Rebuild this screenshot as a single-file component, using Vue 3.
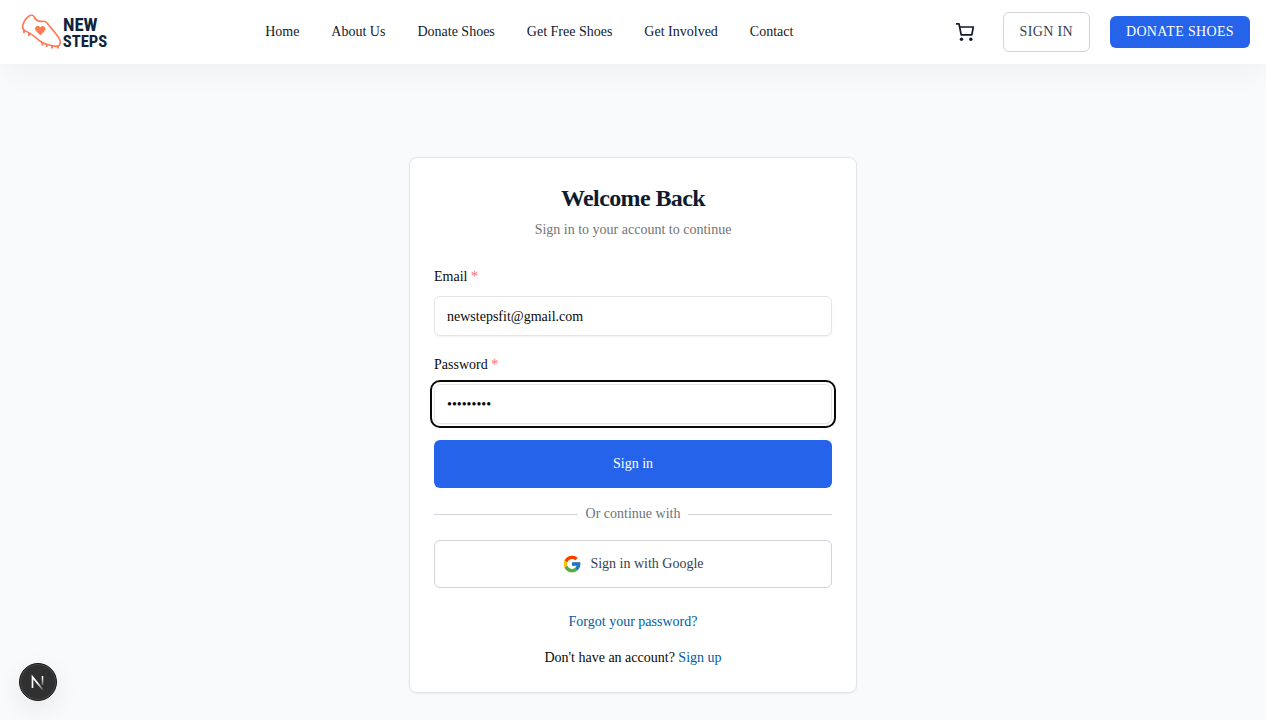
<script setup>
import { ref } from 'vue'

const links = ['Home', 'About Us', 'Donate Shoes', 'Get Free Shoes', 'Get Involved', 'Contact']
const email = ref('newstepsfit@gmail.com')
const password = ref('newsteps1')
</script>

<template>
  <div class="page">
    <header class="topbar">
      <a class="logo" href="#" aria-label="New Steps home">
        <svg viewBox="18 9 288 144" width="96" height="48" aria-hidden="true">
          <g fill="none" stroke="#ff7a55" stroke-width="5" stroke-linecap="round" stroke-linejoin="round">
            <path d="M66 30C56 30 43 44 39 58C36 68 39 75 46 78C61 83 73 94 87 106C100 117 119 121 137 124C148 125 153 118 150 106C148 98 141 91 134 82L111 54C108 49 102 48 95 49C86 50 79 46 74 39C71 33 70 30 66 30Z" />
            <path stroke-width="6" d="M42 77v5M57 85v6M97 115v4M110 119v4M126 123v5M144 123v5" />
          </g>
          <path fill="#ff7a55" d="M91 91L78 78C73 72 75 64 82 63C86 62 89 64 91 67C94 63 99 62 103 65C108 69 107 75 103 79Z" />
          <text class="logo-text logo-new" x="159" y="77">NEW</text>
          <text class="logo-text" x="158" y="125">STEPS</text>
        </svg>
      </a>
      <nav class="links" aria-label="Main">
        <a v-for="link in links" :key="link" href="#">{{ link }}</a>
      </nav>
      <div class="actions">
        <button class="cart" type="button" aria-label="Cart">
          <svg viewBox="0 0 20 20" width="20" height="20" fill="none" stroke="#0f1b2d" stroke-width="1.700" stroke-linejoin="round" aria-hidden="true">
            <path d="M1 1.900h3l2.200 11h10.600l1.500-7.900H4.600" />
            <circle cx="6.500" cy="17.300" r="1.700" fill="#0f1b2d" stroke="none" />
            <circle cx="15.800" cy="17.300" r="1.700" fill="#0f1b2d" stroke="none" />
          </svg>
        </button>
        <a class="btn-outline" href="#">SIGN IN</a>
        <a class="btn-donate" href="#">DONATE SHOES</a>
      </div>
    </header>

    <main class="content">
      <section class="card">
        <h1>Welcome Back</h1>
        <p class="subtitle">Sign in to your account to continue</p>
        <form @submit.prevent>
          <div class="field">
            <label for="email">Email <span class="required">*</span></label>
            <input id="email" v-model="email" type="email" />
          </div>
          <div class="field">
            <label for="password">Password <span class="required">*</span></label>
            <input id="password" v-model="password" class="active" type="password" />
          </div>
          <button class="submit" type="submit">Sign in</button>
        </form>
        <div class="divider"><span>Or continue with</span></div>
        <button class="google" type="button">
          <svg viewBox="0 0 48 48" width="20" height="20" aria-hidden="true">
            <path fill="#FFC107" d="M43.600 20H24v8h11.300c-1.600 4.700-6.100 8-11.300 8-6.600 0-12-5.400-12-12s5.400-12 12-12c3.100 0 5.800 1.200 7.900 3l5.700-5.700C34 6.100 29.300 4 24 4 13 4 4 13 4 24s9 20 20 20 20-9 20-20c0-1.300-.1-2.700-.4-4z" />
            <path fill="#FF3D00" d="M6.300 14.700l6.600 4.800C14.700 15.100 19 12 24 12c3.100 0 5.800 1.200 7.900 3l5.700-5.700C34 6.100 29.300 4 24 4 16.300 4 9.700 8.300 6.300 14.700z" />
            <path fill="#4CAF50" d="M24 44c5.200 0 9.900-2 13.400-5.200l-6.200-5.200C29.200 35.100 26.700 36 24 36c-5.200 0-9.600-3.300-11.300-7.900l-6.500 5C9.500 39.600 16.200 44 24 44z" />
            <path fill="#1976D2" d="M43.600 20H24v8h11.300c-.8 2.200-2.200 4.200-4.100 5.600l6.200 5.200C37 39.200 44 34 44 24c0-1.300-.1-2.700-.4-4z" />
          </svg>
          Sign in with Google
        </button>
        <p class="forgot"><a href="#">Forgot your password?</a></p>
        <p class="signup">Don't have an account? <a href="#">Sign up</a></p>
      </section>
    </main>

    <button class="dev-badge" type="button" aria-label="Open developer tools">
      <svg viewBox="2 2 36 36" width="36" height="36" fill="none" aria-hidden="true">
        <defs>
          <linearGradient id="stem" x1="0" y1="13" x2="0" y2="25" gradientUnits="userSpaceOnUse">
            <stop offset="0.200" stop-color="#fff" />
            <stop offset="1" stop-color="#fff" stop-opacity="0.100" />
          </linearGradient>
          <linearGradient id="slash" x1="20" y1="21" x2="25" y2="28" gradientUnits="userSpaceOnUse">
            <stop stop-color="#fff" />
            <stop offset="1" stop-color="#fff" stop-opacity="0.100" />
          </linearGradient>
        </defs>
        <path d="M14.500 26V15L25 28" stroke="url(#slash)" stroke-width="1.700" />
        <path d="M24.500 14v9" stroke="url(#stem)" stroke-width="1.500" />
      </svg>
    </button>
  </div>
</template>

<style>
body {
  margin: 0;
  background: #fff;
}
</style>

<style scoped>
.page {
  display: flex;
  flex-direction: column;
  box-sizing: border-box;
  min-height: 100vh;
  margin-right: 14px;
  overflow: clip;
  background: #f8fafc;
  color: #0a0a0a;
  font: 14px/20px "Liberation Serif", "Times New Roman", serif;
}
a {
  color: inherit;
  text-decoration: none;
}
button,
input {
  font: inherit;
}
button {
  cursor: pointer;
}
svg {
  display: block;
}
.topbar {
  display: flex;
  align-items: center;
  justify-content: space-between;
  height: 64px;
  padding: 0 16px;
  background: #fff;
  box-shadow: 0 8px 30px rgba(0, 0, 0, 0.04);
}
.logo-text {
  fill: #10243e;
  font: 700 50px "Roboto Condensed", "Liberation Sans Narrow", "Liberation Sans", sans-serif;
}
.logo-new {
  font-size: 56px;
}
.links {
  display: flex;
  gap: 32px;
  color: #0f1b2d;
}
.actions {
  display: flex;
  align-items: center;
  gap: 20px;
}
.cart {
  display: grid;
  place-items: center;
  width: 36px;
  height: 40px;
  padding: 0;
  border: 0;
  background: none;
}
.btn-outline,
.btn-donate {
  border-radius: 6px;
  letter-spacing: 0.025em;
}
.btn-outline {
  padding: 9px 16px;
  border: 1px solid #d1d5db;
  color: #374151;
}
.btn-donate {
  padding: 6px 16px;
  background: #2563eb;
  color: #fff;
}
.content {
  display: flex;
  justify-content: center;
  padding: 93px 16px 27px;
}
.card {
  box-sizing: border-box;
  width: 100%;
  max-width: 448px;
  padding: 24px;
  border: 1px solid #e5e5e5;
  border-radius: 8px;
  background: #fff;
  box-shadow: 0 1px 2px rgba(0, 0, 0, 0.06);
}
h1 {
  margin: 0;
  color: #0f1b2d;
  font-size: 24px;
  line-height: 32px;
  letter-spacing: -0.025em;
  text-align: center;
}
p {
  margin: 0;
  text-align: center;
}
.subtitle {
  margin: 6px 0 27px;
  color: #737373;
}
form {
  display: flex;
  flex-direction: column;
}
.field {
  display: flex;
  flex-direction: column;
  gap: 9px;
}
.field + .field {
  margin-top: 19px;
}
.required {
  color: #ff6467;
}
input {
  box-sizing: border-box;
  width: 100%;
  height: 40px;
  padding: 2px 12px 0;
  border: 1px solid #e5e5e5;
  border-radius: 6px;
  background: #fff;
  color: #0a0a0a;
  box-shadow: 0 1px 2px rgba(0, 0, 0, 0.05);
}
input.active,
input:focus-visible {
  outline: 2px solid #0a0a0a;
  outline-offset: 2px;
}
.submit,
.google {
  width: 100%;
  height: 48px;
  border-radius: 6px;
}
.submit {
  margin-top: 16px;
  border: 0;
  background: #2563eb;
  color: #fff;
}
.divider {
  display: flex;
  align-items: center;
  gap: 8px;
  margin: 16px 0;
  color: #6b7280;
}
.divider::before,
.divider::after {
  flex: 1;
  height: 1px;
  background: #d1d5db;
  content: "";
}
.google {
  display: flex;
  align-items: center;
  justify-content: center;
  gap: 8px;
  border: 1px solid #d1d5db;
  background: #fff;
  color: #374151;
}
.forgot {
  margin: 24px 0 16px;
}
.forgot a,
.signup a {
  color: #005b9f;
}
.dev-badge {
  position: fixed;
  bottom: 19px;
  left: 19px;
  display: grid;
  place-items: center;
  width: 38px;
  height: 38px;
  padding: 0;
  border: 1px solid #171717;
  border-radius: 50%;
  background: #303030;
  box-shadow: inset 0 0 0 1px #4a4a4a, 0 8px 24px rgba(0, 0, 0, 0.08);
}
</style>
